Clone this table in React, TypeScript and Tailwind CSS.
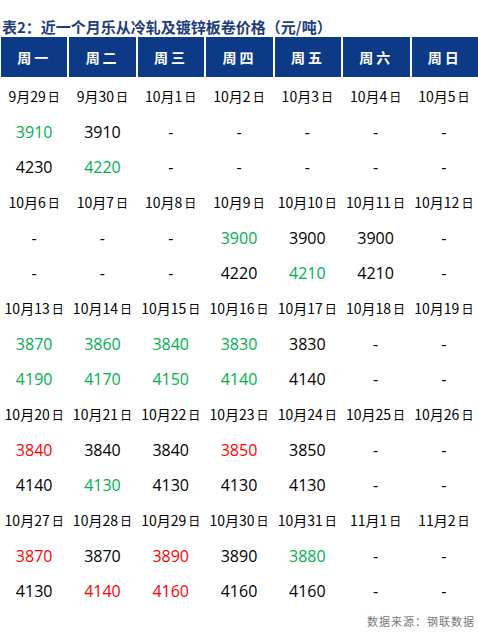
import React from "react";

type Cell = { v: string; c?: "g" | "r" };

const days = ["周一", "周二", "周三", "周四", "周五", "周六", "周日"];

const d = (s: string): Cell => ({ v: s });
const g = (s: string): Cell => ({ v: s, c: "g" });
const r = (s: string): Cell => ({ v: s, c: "r" });
const x: Cell = { v: "-" };

const weeks: { dates: string[]; rows: Cell[][] }[] = [
  {
    dates: ["9月29日", "9月30日", "10月1日", "10月2日", "10月3日", "10月4日", "10月5日"],
    rows: [
      [g("3910"), d("3910"), x, x, x, x, x],
      [d("4230"), g("4220"), x, x, x, x, x],
    ],
  },
  {
    dates: ["10月6日", "10月7日", "10月8日", "10月9日", "10月10日", "10月11日", "10月12日"],
    rows: [
      [x, x, x, g("3900"), d("3900"), d("3900"), x],
      [x, x, x, d("4220"), g("4210"), d("4210"), x],
    ],
  },
  {
    dates: ["10月13日", "10月14日", "10月15日", "10月16日", "10月17日", "10月18日", "10月19日"],
    rows: [
      [g("3870"), g("3860"), g("3840"), g("3830"), d("3830"), x, x],
      [g("4190"), g("4170"), g("4150"), g("4140"), d("4140"), x, x],
    ],
  },
  {
    dates: ["10月20日", "10月21日", "10月22日", "10月23日", "10月24日", "10月25日", "10月26日"],
    rows: [
      [r("3840"), d("3840"), d("3840"), r("3850"), d("3850"), x, x],
      [d("4140"), g("4130"), d("4130"), d("4130"), d("4130"), x, x],
    ],
  },
  {
    dates: ["10月27日", "10月28日", "10月29日", "10月30日", "10月31日", "11月1日", "11月2日"],
    rows: [
      [r("3870"), d("3870"), r("3890"), d("3890"), g("3880"), x, x],
      [d("4130"), r("4140"), r("4160"), d("4160"), d("4160"), x, x],
    ],
  },
];

const DateText = ({ s }: { s: string }) => {
  const m = s.match(/^(\d+)月(\d+)日$/);
  if (!m) return <>{s}</>;
  return (
    <>
      {m[1]}
      <span>月</span>
      {m[2]}
      <span className="ml-[2px] text-[12px]">日</span>
    </>
  );
};

export default function App() {
  return (
    <div className="w-[478px] h-[639px] bg-white overflow-hidden">
      {/* title */}
      <div className="h-[37px] flex items-end pb-[3px] pl-[2px] text-[15px] font-bold text-[#1e3c7e] leading-none [font-family:'Noto_Sans_CJK_SC',sans-serif]">
        表2：近一个月乐从冷轧及镀锌板卷价格（元/吨）
      </div>

      {/* header */}
      <div className="grid grid-cols-7 gap-x-[2px] pl-[1px] h-[40px]">
        {days.map((t) => (
          <div
            key={t}
            className="bg-[#0c3a86] flex items-center justify-center text-white font-bold text-[14px] tracking-[3px] [font-family:'Noto_Sans_CJK_SC',sans-serif]"
          >
            {t}
          </div>
        ))}
      </div>

      {/* body */}
      <div className="pt-[2px]">
        {weeks.map((w, i) => (
          <div key={i}>
            <div className="grid grid-cols-7 h-[35.3px] items-center text-[14px] text-black [font-family:'Noto_Sans_CJK_SC',sans-serif]">
              {w.dates.map((s) => (
                <div key={s} className="text-center whitespace-nowrap">
                  <DateText s={s} />
                </div>
              ))}
            </div>
            {w.rows.map((row, j) => (
              <div
                key={j}
                className="grid grid-cols-7 h-[35.3px] items-center text-[16px] [font-family:'Open_Sans',sans-serif]"
              >
                {row.map((c, k) => (
                  <div
                    key={k}
                    className={
                      "text-center " +
                      (c.c === "g" ? "text-[#00b050]" : c.c === "r" ? "text-[#ff0000]" : "text-black")
                    }
                  >
                    {c.v}
                  </div>
                ))}
              </div>
            ))}
          </div>
        ))}
      </div>

      {/* source */}
      <div className="flex justify-end pr-[3px] pt-[5px] text-[11px] text-[#777777] tracking-[1px] [font-family:'Noto_Sans_CJK_SC',sans-serif]">
        数据来源：钢联数据
      </div>
    </div>
  );
}
